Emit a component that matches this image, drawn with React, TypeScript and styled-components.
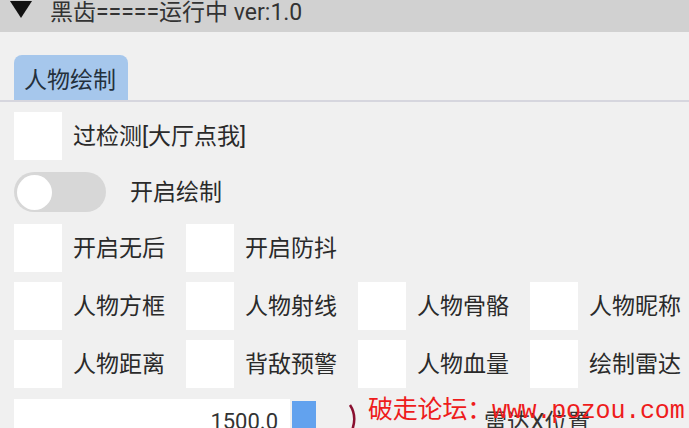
import React, { useState } from "react";
import styled, { createGlobalStyle } from "styled-components";

const Global = createGlobalStyle`
  html, body { margin: 0; padding: 0; background: #f0f0f0; overflow: hidden; }
  body { font-family: Roboto, "Noto Sans CJK SC", sans-serif; }
`;

const Page = styled.div`
  width: 689px;
  height: 428px;
  position: relative;
  overflow: hidden;
  background: #f0f0f0;
  color: #2a2a2a;
`;

const Header = styled.div`
  height: 32px;
  background: #d1d1d1;
  display: flex;
  align-items: flex-start;
  padding-left: 10px;
  gap: 18px;
  box-sizing: border-box;
`;

const Triangle = styled.span`
  width: 0;
  height: 0;
  border-left: 11px solid transparent;
  border-right: 11px solid transparent;
  border-top: 17px solid #111;
  margin-top: 1px;
`;

const Title = styled.span`
  font-size: 23px;
  color: #333;
  line-height: 1;
  margin-top: 1px;
`;

const TabBar = styled.div`
  margin-top: 23px;
  padding-left: 14px;
  display: flex;
  border-bottom: 2px solid #d6d6de;
`;

const Tab = styled.div`
  width: 114px;
  height: 45px;
  box-sizing: border-box;
  background: #a6c7ec;
  border-radius: 8px 8px 0 0;
  display: flex;
  align-items: center;
  padding-left: 10px;
  font-size: 23px;
  color: #24303c;
`;

const Panel = styled.div`
  padding: 10px 14px 0;
  display: flex;
  flex-direction: column;
`;

const Row = styled.div`
  display: flex;
  align-items: center;
`;

const Grid = styled.div<{ $mt?: number }>`
  display: grid;
  grid-template-columns: repeat(4, 172px);
  align-items: center;
  margin-top: ${(p) => p.$mt ?? 0}px;
`;

const Item = styled.label`
  display: flex;
  align-items: center;
  gap: 11px;
  cursor: pointer;
`;

const Box = styled.span`
  width: 48px;
  height: 48px;
  background: #ffffff;
  flex-shrink: 0;
`;

const Label = styled.span`
  font-size: 23px;
  color: #2a2a2a;
  white-space: nowrap;
  line-height: 1;
`;

const Toggle = styled.span`
  width: 92px;
  height: 40px;
  border-radius: 20px;
  background: #d7d7d7;
  display: flex;
  align-items: center;
  padding-left: 3px;
  box-sizing: border-box;
`;

const Knob = styled.span`
  width: 35px;
  height: 35px;
  border-radius: 50%;
  background: #fff;
`;

const ToggleRow = styled.div`
  display: flex;
  align-items: center;
  gap: 24px;
  margin-top: 12px;
`;

const Bottom = styled.div`
  display: flex;
  align-items: flex-start;
  margin-top: 11px;
`;

const Input = styled.div`
  width: 276px;
  height: 40px;
  background: #fff;
  display: flex;
  justify-content: flex-end;
  padding: 12px 12px 0 0;
  box-sizing: border-box;
  font-size: 22px;
  color: #333;
  line-height: 1;
`;

const Thumb = styled.span`
  width: 24px;
  height: 30px;
  background: #62a2ee;
  margin-left: 2px;
  margin-top: 2px;
`;

const Arc = styled.svg`
  margin-left: 32px;
  margin-top: 4px;
`;

const BottomLabel = styled.span`
  font-size: 23px;
  color: #333;
  margin-left: 124px;
  margin-top: 12px;
  line-height: 1;
  white-space: nowrap;
`;

const Watermark = styled.div`
  position: absolute;
  left: 368px;
  top: 399px;
  color: #ee1c1c;
  font-family: "Liberation Mono", "Noto Sans CJK SC", monospace;
  font-size: 25px;
  line-height: 1;
  white-space: nowrap;
  letter-spacing: -0.2px;
`;

function Check({ text }: { text: string }) {
  return (
    <Item>
      <Box />
      <Label>{text}</Label>
    </Item>
  );
}

export default function App() {
  const [on] = useState(false);
  return (
    <Page>
      <Global />
      <Header>
        <Triangle />
        <Title>黑齿=====运行中 ver:1.0</Title>
      </Header>
      <TabBar>
        <Tab>人物绘制</Tab>
      </TabBar>
      <Panel>
        <Row>
          <Check text="过检测[大厅点我]" />
        </Row>
        <ToggleRow>
          <Toggle aria-checked={on}>
            <Knob />
          </Toggle>
          <Label>开启绘制</Label>
        </ToggleRow>
        <Grid $mt={12}>
          <Check text="开启无后" />
          <Check text="开启防抖" />
        </Grid>
        <Grid $mt={10}>
          <Check text="人物方框" />
          <Check text="人物射线" />
          <Check text="人物骨骼" />
          <Check text="人物昵称" />
        </Grid>
        <Grid $mt={10}>
          <Check text="人物距离" />
          <Check text="背敌预警" />
          <Check text="人物血量" />
          <Check text="绘制雷达" />
        </Grid>
        <Bottom>
          <Input>1500.0</Input>
          <Thumb />
          <Arc width="12" height="30" viewBox="0 0 12 30">
            <path d="M2 2 Q10 14 3 30" stroke="#8a1030" strokeWidth="2.5" fill="none" />
          </Arc>
          <BottomLabel>雷达X位置</BottomLabel>
        </Bottom>
      </Panel>
      <Watermark>破走论坛：www.pozou.com</Watermark>
    </Page>
  );
}
